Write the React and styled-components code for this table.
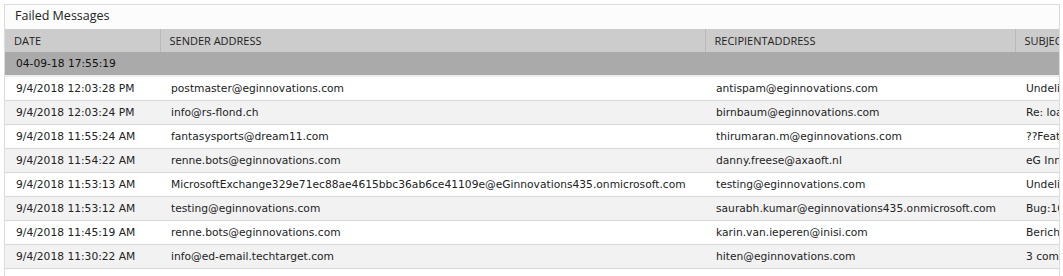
import React from 'react';
import styled, { createGlobalStyle } from 'styled-components';

const GlobalStyle = createGlobalStyle`
  body {
    margin: 0;
    background: #ffffff;
    font-family: "DejaVu Sans", Verdana, sans-serif;
  }
`;

const Page = styled.div`
  padding: 4px 0 0 4px;
  width: 1063px;
  height: 276px;
  box-sizing: border-box;
  overflow: hidden;
`;

const Panel = styled.div`
  width: 1054px;
  height: 280px;
  border: 1px solid #dcdcdc;
  border-bottom: none;
  overflow: hidden;
  background: #ffffff;
`;

const Title = styled.div`
  height: 24px;
  line-height: 22px;
  padding-left: 10px;
  font-family: "Open Sans", sans-serif;
  font-size: 12.5px;
  color: #222;
  background: #fcfcfc;
`;

const Table = styled.table`
  border-collapse: collapse;
  table-layout: fixed;
  width: 1200px;
`;

const HeadCell = styled.th`
  height: 23px;
  padding: 0 0 0 9px;
  text-align: left;
  font-family: "Open Sans", sans-serif;
  font-weight: normal;
  font-size: 11px;
  color: #222;
  background: #cccccc;
  border-left: 1px solid #b9b9b9;
  white-space: nowrap;
  overflow: hidden;
  &:first-child {
    border-left: none;
  }
`;

const GroupCell = styled.td`
  height: 23px;
  padding: 0 0 0 11px;
  background: #aaaaaa;
  font-size: 10.7px;
  color: #111;
  border-bottom: 2px solid #eeeeee;
`;

const Row = styled.tr`
  background: ${p => (p.$alt ? '#f2f2f2' : '#ffffff')};
`;

const Cell = styled.td`
  height: 23px;
  padding: 0 0 0 11px;
  font-size: 10.7px;
  color: #222;
  border-bottom: 1px solid #d8d8d8;
  white-space: nowrap;
  overflow: hidden;
`;

const rows = [
  ['9/4/2018 12:03:28 PM', 'postmaster@eginnovations.com', 'antispam@eginnovations.com', 'Undeliverable'],
  ['9/4/2018 12:03:24 PM', 'info@rs-flond.ch', 'birnbaum@eginnovations.com', 'Re: loan offer'],
  ['9/4/2018 11:55:24 AM', 'fantasysports@dream11.com', 'thirumaran.m@eginnovations.com', '??Featured'],
  ['9/4/2018 11:54:22 AM', 'renne.bots@eginnovations.com', 'danny.freese@axaoft.nl', 'eG Innovations'],
  ['9/4/2018 11:53:13 AM', 'MicrosoftExchange329e71ec88ae4615bbc36ab6ce41109e@eGinnovations435.onmicrosoft.com', 'testing@eginnovations.com', 'Undeliverable'],
  ['9/4/2018 11:53:12 AM', 'testing@eginnovations.com', 'saurabh.kumar@eginnovations435.onmicrosoft.com', 'Bug:16'],
  ['9/4/2018 11:45:19 AM', 'renne.bots@eginnovations.com', 'karin.van.ieperen@inisi.com', 'Bericht'],
  ['9/4/2018 11:30:22 AM', 'info@ed-email.techtarget.com', 'hiten@eginnovations.com', '3 comments'],
];

export default function App() {
  return (
    <>
      <GlobalStyle />
      <Page>
        <Panel>
          <Title>Failed Messages</Title>
          <Table>
            <colgroup>
              <col style={{ width: 155 }} />
              <col style={{ width: 545 }} />
              <col style={{ width: 310 }} />
              <col style={{ width: 190 }} />
            </colgroup>
            <thead>
              <tr>
                <HeadCell>DATE</HeadCell>
                <HeadCell>SENDER ADDRESS</HeadCell>
                <HeadCell>RECIPIENTADDRESS</HeadCell>
                <HeadCell>SUBJECT</HeadCell>
              </tr>
            </thead>
            <tbody>
              <tr>
                <GroupCell colSpan={4}>04-09-18 17:55:19</GroupCell>
              </tr>
              {rows.map((r, i) => (
                <Row key={i} $alt={i % 2 === 1}>
                  {r.map((c, j) => (
                    <Cell key={j}>{c}</Cell>
                  ))}
                </Row>
              ))}
            </tbody>
          </Table>
        </Panel>
      </Page>
    </>
  );
}
